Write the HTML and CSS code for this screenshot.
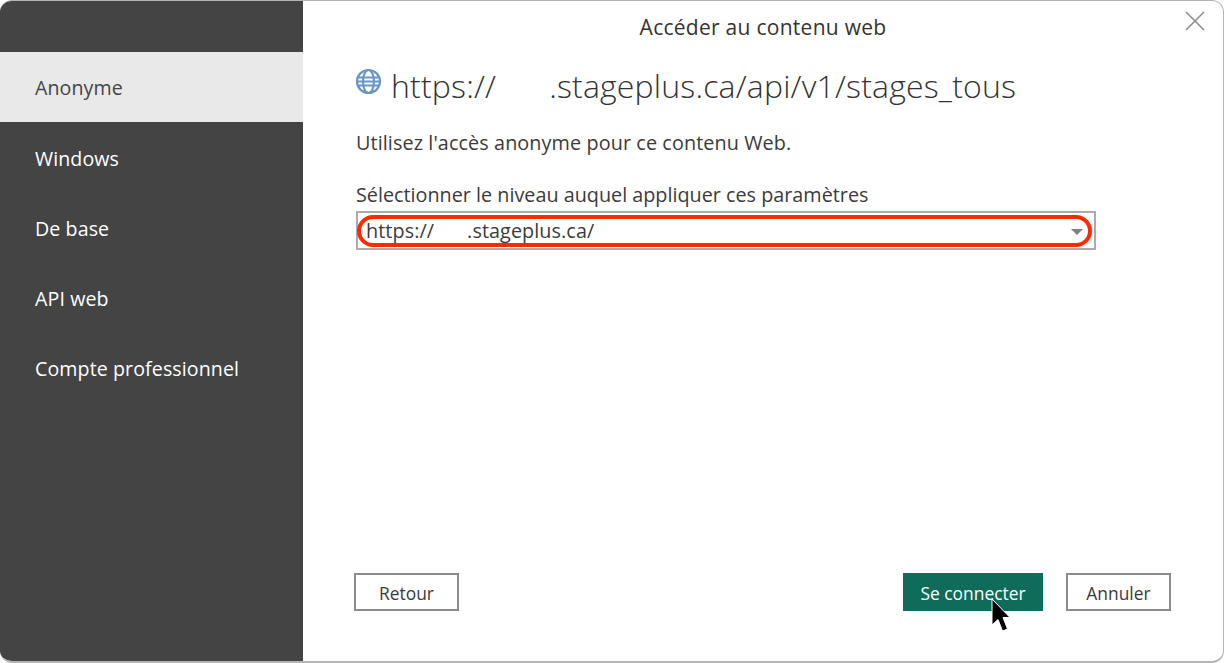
FILE: index.html
```html
<!DOCTYPE html>
<html lang="fr">
<head>
<meta charset="utf-8">
<title>Accéder au contenu web</title>
<link rel="stylesheet" href="styles.css">
</head>
<body>
<div class="dialog">
  <nav class="sidebar">
    <div class="nav-item selected">Anonyme</div>
    <div class="nav-item">Windows</div>
    <div class="nav-item">De base</div>
    <div class="nav-item">API web</div>
    <div class="nav-item">Compte professionnel</div>
  </nav>
  <main class="main">
    <svg class="close" width="20" height="20" viewBox="0 0 20 20"><path d="M1 1L19 19M19 1L1 19" stroke="#8c8c8c" stroke-width="1.6" fill="none"/></svg>
    <h1 class="dialog-title">Accéder au contenu web</h1>
    <div class="url-row">
      <svg class="globe" width="27" height="27" viewBox="0 0 27 27" fill="none" stroke="#6b96c2" stroke-width="2.2">
        <circle cx="13.5" cy="13.5" r="11.5"/>
        <ellipse cx="13.5" cy="13.5" rx="5.5" ry="11.5"/>
        <path d="M3 9.5H24M2 13.5H25M3 17.5H24"/>
      </svg>
      <span class="url">https://<span class="redacted"></span>.stageplus.ca/api/v1/stages_tous</span>
    </div>
    <p class="desc">Utilisez l'accès anonyme pour ce contenu Web.</p>
    <label class="level-label">Sélectionner le niveau auquel appliquer ces paramètres</label>
    <div class="select">
      <span class="select-value">https://<span class="redacted-small"></span>.stageplus.ca/</span>
      <span class="arrow"></span>
      <span class="highlight"></span>
    </div>
    <div class="actions">
      <button class="btn">Retour</button>
      <div class="actions-right">
        <button class="btn primary">Se connecter</button>
        <button class="btn">Annuler</button>
      </div>
    </div>
    <svg class="cursor" width="22" height="36" viewBox="0 0 22 36"><path d="M2 1V27L8 21.5L12.5 33L17.5 31L13 19.5H20Z" fill="#000" stroke="#fff" stroke-width="1"/></svg>
  </main>
</div>
</body>
</html>
```
FILE: styles.css
```css
* { box-sizing: border-box; }
html, body { margin: 0; padding: 0; background: #fff; }
body { font-family: "Open Sans", "Noto Sans", "Liberation Sans", sans-serif; color: #3b3b3b; }
.dialog {
  width: 1224px;
  height: 663px;
  display: flex;
  overflow: hidden;
  border-radius: 12px;
  border-top: 1px solid #b4b4b4;
  border-right: 1px solid #b4b4b4;
  border-bottom: 2px solid #b4b4b4;
  background: #fff;
}
.sidebar {
  width: 303px;
  flex: none;
  background: #444444;
  padding-top: 51px;
  color: #fff;
}
.nav-item {
  height: 70px;
  display: flex;
  align-items: center;
  padding-left: 35px;
  padding-top: 2px;
  font-size: 19.6px;
  letter-spacing: 0.1px;
}
.nav-item.selected { background: #e9e9e9; color: #454545; padding-top: 0; }
.main {
  position: relative;
  flex: 1;
  padding: 0 53px 0 53px;
  display: flex;
  flex-direction: column;
}
.close { position: absolute; top: 10px; right: 18px; }
.dialog-title {
  margin: 11px 0 0;
  font-size: 21px;
  line-height: 30px;
  font-weight: 400;
  text-align: center;
  letter-spacing: 0.27px;
  color: #333;
}
.url-row { display: flex; align-items: center; margin-top: 21px; height: 48px; }
.globe { flex: none; margin-right: 9px; margin-left: -1px; margin-top: -11px; }
.url { font-size: 32px; font-weight: 300; letter-spacing: 0.18px; white-space: nowrap; color: #333; margin-top: -4px; }
.redacted { display: inline-block; width: 53px; }
.desc { margin: 19px 0 0; font-size: 19.8px; line-height: 26px; letter-spacing: 0.1px; }
.level-label { display: block; margin-top: 26px; font-size: 19.8px; line-height: 26px; letter-spacing: 0; }
.select {
  position: relative;
  width: 740px;
  height: 39px;
  margin-top: 3px;
  border: 2px solid #ababab;
  display: flex;
  align-items: center;
  padding-left: 8px;
  font-size: 19.8px;
  letter-spacing: 0.08px;
}
.redacted-small { display: inline-block; width: 33px; }
.arrow {
  position: absolute;
  right: 11px;
  top: 16px;
  border-left: 6px solid transparent;
  border-right: 6px solid transparent;
  border-top: 6px solid #808080;
}
.highlight {
  position: absolute;
  left: -1px;
  top: 2px;
  width: 735px;
  height: 32px;
  border: 4px solid #ff2a00;
  border-radius: 16px;
}
.actions {
  margin-top: auto;
  margin-bottom: 50px;
  margin-left: -2px;
  margin-right: -1px;
  display: flex;
  justify-content: space-between;
}
.actions-right { display: flex; gap: 23px; }
.btn {
  width: 105px;
  height: 38px;
  background: #fff;
  border: 2px solid #8a8a8a;
  font-family: inherit;
  font-size: 17.4px;
  letter-spacing: 0;
  color: #3b3b3b;
  padding: 2px 0 0;
}
.btn.primary { width: 140px; background: #0f6b5a; border: none; color: #fff; }
.cursor { position: absolute; left: 687px; top: 597px; }
```
